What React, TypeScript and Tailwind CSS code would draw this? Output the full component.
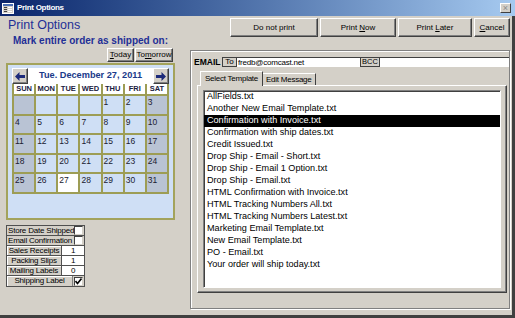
import React from "react";

const raised =
  "border border-t-white border-l-white border-r-[#404040] border-b-[#404040] shadow-[inset_-1px_-1px_0_#808080] bg-[#d4d0c8]";

function WinBtn({ className, children }: { className: string; children: React.ReactNode }) {
  return (
    <div className={`${className} ${raised} flex items-center justify-center text-[8px] leading-none text-black`}>
      {children}
    </div>
  );
}

function Arrow({ dir }: { dir: "left" | "right" }) {
  return (
    <svg width="10" height="9" viewBox="0 0 10 9" className={dir === "right" ? "rotate-180" : ""}>
      <polygon points="0,4.5 4.5,0 4.5,3 10,3 10,6 4.5,6 4.5,9" fill="#1c2a7a" />
    </svg>
  );
}

function TitleBar() {
  return (
    <div className="h-[16px] flex items-center bg-linear-to-r from-[#0a246a] to-[#a6caf0] pl-[2px] pr-[4px] shrink-0">
      <svg width="12" height="11" viewBox="0 0 12 11">
        <rect x="0.5" y="0.5" width="11" height="10" fill="#d4d0c8" stroke="#ffffff" />
        <rect x="1" y="1" width="10" height="2" fill="#4a6fb5" />
        <rect x="2" y="4" width="3" height="1" fill="#404040" />
        <rect x="6" y="4" width="4" height="1" fill="#ffffff" />
        <rect x="2" y="6" width="3" height="1" fill="#404040" />
        <rect x="6" y="6" width="4" height="1" fill="#ffffff" />
        <rect x="2" y="8" width="3" height="1" fill="#404040" />
        <rect x="6" y="8" width="4" height="1" fill="#ffffff" />
      </svg>
      <span className="ml-[3px] text-white font-bold text-[8px] tracking-[-0.3px] leading-none">Print Options</span>
      <div className="ml-auto w-[11px] h-[10px] bg-[#d4d0c8] border border-t-white border-l-white border-r-[#404040] border-b-[#404040] flex items-center justify-center text-[9px] leading-none text-[#8a8a8a]">
        ×
      </div>
    </div>
  );
}

const DAYS = ["SUN", "MON", "TUE", "WED", "THU", "FRI", "SAT"];

function Calendar() {
  const cells: (number | null)[] = [null, null, null, null];
  for (let d = 1; d <= 31; d++) cells.push(d);
  return (
    <div className="mt-[1px] w-[169px] h-[157px] border-2 border-[#a3a35c] bg-[#cfdff5] pt-[3px] px-[4px] flex flex-col">
      <div className="h-[16px] flex">
        <div className={`w-[16px] h-[16px] ${raised} flex items-center justify-center`}>
          <Arrow dir="left" />
        </div>
        <div className="flex-1 bg-white flex items-center justify-center text-[9.2px] font-bold text-[#1a3a8a] leading-none">
          Tue. December 27, 2011
        </div>
        <div className={`w-[16px] h-[16px] ${raised} flex items-center justify-center`}>
          <Arrow dir="right" />
        </div>
      </div>
      <div className="grid grid-cols-7 gap-[2px] bg-[#9d9d55] px-[2px] pb-[2px]">
        {DAYS.map((d) => (
          <div key={d} className="h-[10px] bg-white flex items-center justify-center text-[7.5px] font-bold text-[#202040] leading-none">
            {d}
          </div>
        ))}
        {cells.map((c, i) => {
          const col = i % 7;
          const weekend = col === 0 || col === 6;
          const bg = c === 27 ? "bg-white" : weekend ? "bg-[#b9c3d4]" : "bg-[#cfdff5]";
          return (
            <div key={i} className={`h-[17.5px] ${bg} pl-[1px] pt-[2px] text-[8.5px] leading-none text-[#202030]`}>
              {c ?? ""}
            </div>
          );
        })}
      </div>
    </div>
  );
}

function Check({ checked }: { checked?: boolean }) {
  return (
    <div className="w-[9px] h-[9px] bg-white border border-t-[#404040] border-l-[#404040] border-r-[#d4d0c8] border-b-[#d4d0c8] flex items-center justify-center">
      {checked && (
        <svg width="7" height="7" viewBox="0 0 7 7">
          <polyline points="0.5,3 2.5,5.5 6.5,0.5" fill="none" stroke="#000" strokeWidth="1.6" />
        </svg>
      )}
    </div>
  );
}

function OptionsTable() {
  const countRows: [string, string][] = [
    ["Sales Receipts", "1"],
    ["Packing Slips", "1"],
    ["Mailing Labels", "0"],
  ];
  return (
    <div className="mt-[5px] w-[79px] border border-[#505050] flex flex-col divide-y divide-[#505050] text-[8px] tracking-[-0.2px] leading-none text-black">
      <div className="h-[10px] flex items-center pl-[1px] pr-[1px]">
        <span className="flex-1 whitespace-nowrap">Store Date Shipped</span>
        <Check />
      </div>
      <div className="h-[10px] flex items-center pl-[1px] pr-[1px]">
        <span className="flex-1 whitespace-nowrap">Email Confirmation</span>
        <Check />
      </div>
      {countRows.map(([l, v]) => (
        <div key={l} className="h-[10px] flex">
          <div className="w-[55px] border-r border-[#505050] flex items-center justify-center whitespace-nowrap bg-[#d4d0c8] shadow-[inset_1px_1px_0_#fff]">
            {l}
          </div>
          <div className="flex-1 bg-white flex items-center justify-center">{v}</div>
        </div>
      ))}
      <div className="h-[10px] flex items-center pr-[1px]">
        <div className="w-[66px] h-full flex items-center justify-center whitespace-nowrap border-r border-[#808080] shadow-[inset_1px_1px_0_#fff]">
          Shipping Label
        </div>
        <div className="flex-1 flex justify-end">
          <Check checked />
        </div>
      </div>
    </div>
  );
}

const TEMPLATES = [
  "AllFields.txt",
  "Another New Email Template.txt",
  "Confirmation with Invoice.txt",
  "Confirmation with ship dates.txt",
  "Credit Issued.txt",
  "Drop Ship - Email - Short.txt",
  "Drop Ship - Email 1 Option.txt",
  "Drop Ship - Email.txt",
  "HTML Confirmation with Invoice.txt",
  "HTML Tracking Numbers All.txt",
  "HTML Tracking Numbers Latest.txt",
  "Marketing Email Template.txt",
  "New Email Template.txt",
  "PO - Email.txt",
  "Your order will ship today.txt",
];

function RightPanel() {
  return (
    <div className="ml-[14px] w-[320px] flex flex-col">
      <div className="mt-[2px] h-[19px] flex justify-end gap-[2px]">
        <WinBtn className="w-[88px] h-full">Do not print</WinBtn>
        <WinBtn className="w-[76px] h-full">
          <span>
            Print <u>N</u>ow
          </span>
        </WinBtn>
        <WinBtn className="w-[74px] h-full">
          <span>
            Print <u>L</u>ater
          </span>
        </WinBtn>
        <WinBtn className="w-[36px] h-full">
          <span>
            <u>C</u>ancel
          </span>
        </WinBtn>
      </div>
      <div className="mt-[13px] h-[259px] border border-[#808080] shadow-[inset_1px_1px_0_#fff,1px_1px_0_#fff] flex flex-col">
        <div className="mt-[6px] ml-[3px] h-[10px] flex items-stretch">
          <span className="w-[28px] text-[8.5px] font-bold leading-[10px] text-black">EMAIL</span>
          <div className="w-[15px] border border-[#404040] bg-[#d4d0c8] flex items-center justify-center text-[8px] leading-none">To</div>
          <div className="w-[123px] bg-white border-t border-[#404040] flex items-center pl-[1px] text-[8px] tracking-[-0.2px] leading-none">
            fredb@comcast.net
          </div>
          <div className="w-[20px] border border-[#404040] bg-[#d4d0c8] flex items-center justify-center text-[7.5px] leading-none">BCC</div>
          <div className="flex-1 bg-white border-t border-[#404040]" />
        </div>
        <div className="mt-[4px] ml-[6px] mr-[2px] flex flex-col">
          <div className="h-[14px] flex items-end pl-[3px] relative z-10">
            <div className="h-[15px] -mb-px bg-[#d4d0c8] border-t border-l border-r border-t-white border-l-white border-r-[#404040] px-[4px] flex items-center text-[8px] tracking-[-0.25px] leading-none">
              Select Template
            </div>
            <div className="h-[12px] bg-[#d4d0c8] border-t border-r border-t-white border-r-[#404040] px-[3px] flex items-center text-[8px] tracking-[-0.25px] leading-none">
              Edit Message
            </div>
          </div>
          <div className="h-[208px] border border-t-white border-l-white border-r-[#404040] border-b-[#404040] shadow-[inset_-1px_-1px_0_#808080] pl-[5px] pt-[4px]">
            <div className="w-[298px] h-[198px] bg-white border border-t-[#808080] border-l-[#808080] border-r-white border-b-white shadow-[inset_1px_1px_0_#404040]">
              {TEMPLATES.map((t, i) => (
                <div
                  key={t}
                  className={`h-[12px] pl-[3px] flex items-center whitespace-nowrap text-[9.1px] leading-none ${
                    i === 2 ? "bg-black text-white" : "text-black"
                  }`}
                >
                  {t}
                </div>
              ))}
            </div>
          </div>
        </div>
      </div>
    </div>
  );
}

export default function App() {
  return (
    <div className="w-[515px] h-[318px] flex flex-col bg-[#d4d0c8] font-['Liberation_Sans',Arial,sans-serif] overflow-hidden">
      <TitleBar />
      <div className="flex flex-1 border-r-[3px] border-b-[3px] border-r-[#404040] border-b-[#404040]">
        <div className="w-[176px] pl-[6px] flex flex-col">
          <div className="mt-[2px] ml-[2px] text-[12.5px] leading-[15px] text-[#1f2f96]">Print Options</div>
          <div className="mt-[2px] ml-[7px] text-[10px] leading-[12px] font-bold text-[#1f2f96] whitespace-nowrap">
            Mark entire order as shipped on:
          </div>
          <div className="mt-[1px] mr-[3px] h-[14px] flex justify-end gap-[1px]">
            <WinBtn className="w-[27px] h-full">
              <span>
                <u>T</u>oday
              </span>
            </WinBtn>
            <WinBtn className="w-[38px] h-full">
              <span>
                To<u>m</u>orrow
              </span>
            </WinBtn>
          </div>
          <Calendar />
          <OptionsTable />
        </div>
        <RightPanel />
      </div>
    </div>
  );
}
